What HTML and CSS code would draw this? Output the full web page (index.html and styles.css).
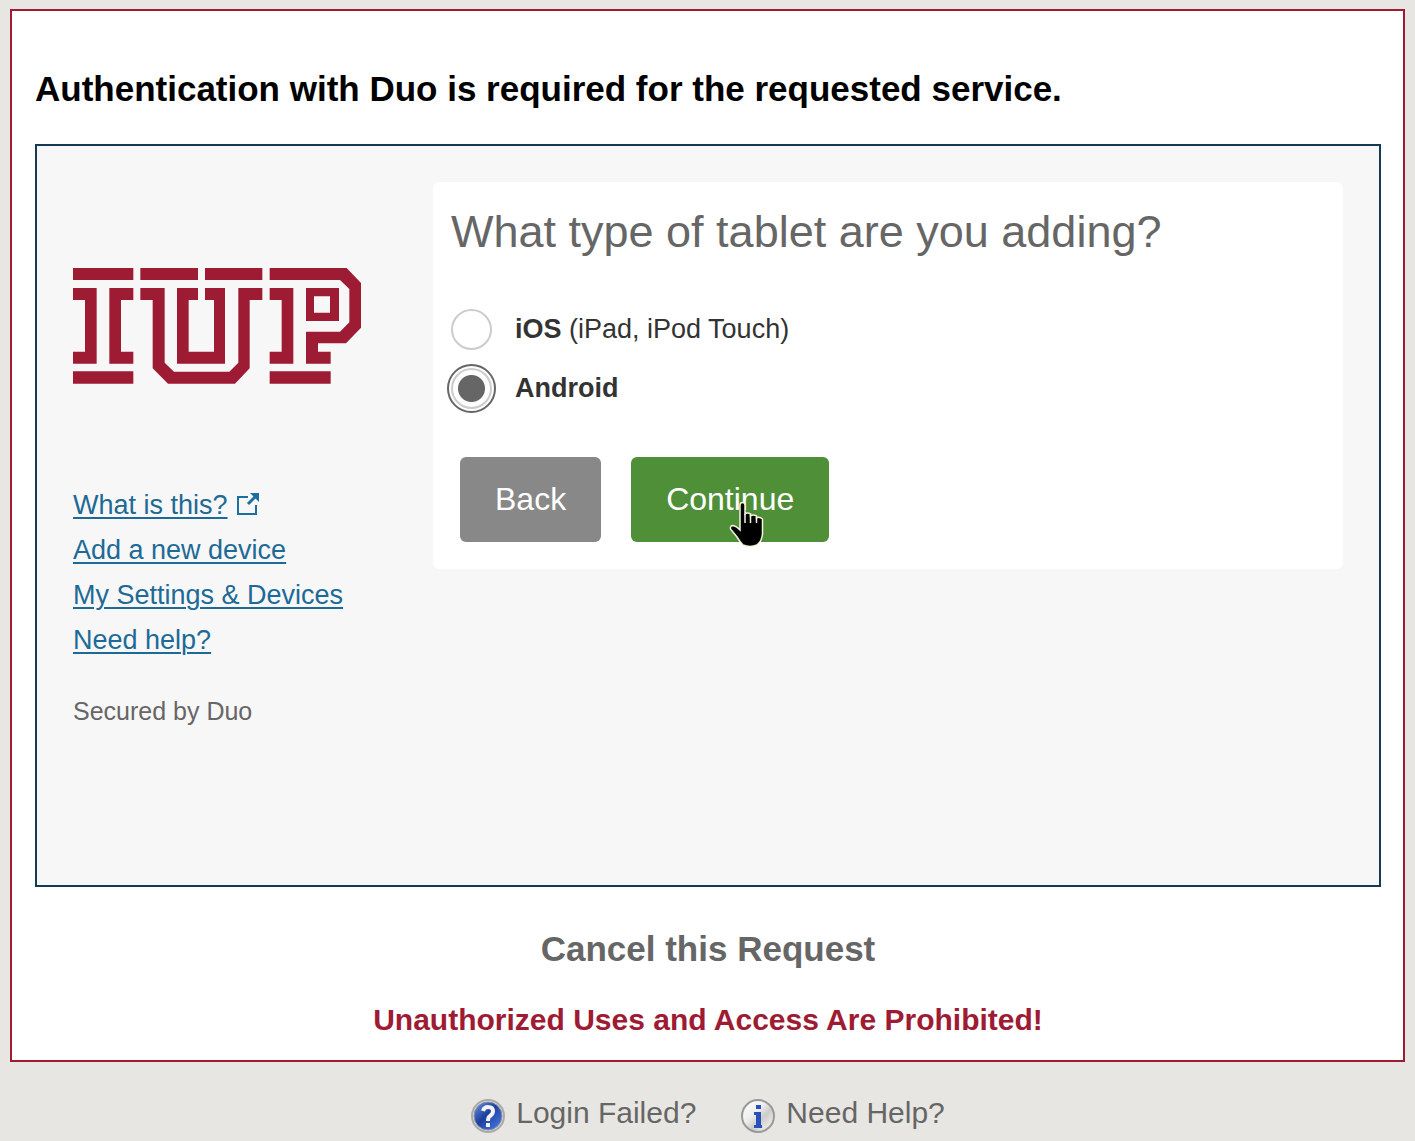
FILE: index.html
```html
<!DOCTYPE html>
<html lang="en">
<head>
    <meta charset="UTF-8">
    <meta name="viewport" content="width=device-width, initial-scale=1.0">
    <title>Duo Authentication</title>
    <link rel="stylesheet" href="styles.css">
</head>
<body>
    <main class="page">
        <h1>Authentication with Duo is required for the requested service.</h1>

        <div class="duo-frame">
            <aside class="sidebar">
                <svg class="logo" viewBox="39 39 864 348" role="img" aria-label="IUP">
                    <path d="M39 39H220V75H39Z M39 99H110V326H39V290H75V135H39Z M148 99H220V135H183V290H220V326H148Z M39 349H220V386H39Z"/>
                    <path d="M241 39H414V75H241Z M435 39H607V75H435Z M241 99H314V323L342 350H508L535 323V99H607V135H569V340L525 386H324L278 340V135H241Z M351 99H414V135H386V290H462V135H435V99H495V326H351Z"/>
                    <path fill-rule="evenodd" d="M629 39H860L903 84V218L858 265H774V290H812V326H738V230H840L868 202V102L840 75H629Z M629 99H700V326H629V290H665V135H629Z M738 99H837V198H738Z M762 124V173H810V124Z M629 349H812V386H629Z"/>
                </svg>
                <ul class="links">
                    <li>
                        <a href="#">What is this?</a>
                        <svg class="external" viewBox="0 0 24 24" aria-hidden="true">
                            <path d="M12 4H2V21H20V12" fill="none" stroke="currentColor" stroke-width="2"/>
                            <path d="M12 11L20 3" fill="none" stroke="currentColor" stroke-width="3"/>
                            <path d="M14 0H23V9Z" fill="currentColor"/>
                        </svg>
                    </li>
                    <li><a href="#">Add a new device</a></li>
                    <li><a href="#">My Settings &amp; Devices</a></li>
                    <li><a href="#">Need help?</a></li>
                </ul>
                <p class="secured">Secured by Duo</p>
            </aside>

            <form class="card">
                <h2>What type of tablet are you adding?</h2>
                <div class="option">
                    <input type="radio" name="tablet" id="ios">
                    <label for="ios"><b>iOS</b> (iPad, iPod Touch)</label>
                </div>
                <div class="option">
                    <input type="radio" name="tablet" id="android" checked>
                    <label for="android"><b>Android</b></label>
                </div>
                <div class="buttons">
                    <button type="button" class="back">Back</button>
                    <button type="button" class="continue">Continue
                        <svg class="pointer" viewBox="0 0 35 47" aria-hidden="true">
                            <path d="M11 4Q11 1.500 13.500 1.500Q16 1.500 16 4V13Q18 11 21.500 13V15Q24 13 27.500 15V17Q30 15 33.500 18V33Q33 40 28 44Q21 47 14 44Q11 41 8 36L1.500 28Q1 24.500 4 24.500Q7 25 11 29Z" fill="#000" stroke="#f4f4dc" stroke-width="1.500"/>
                            <path d="M16 13V22M21.500 14V22M27.500 16V22" fill="none" stroke="#f4f4dc" stroke-width="1.500"/>
                        </svg>
                    </button>
                </div>
            </form>
        </div>

        <a class="cancel" href="#">Cancel this Request</a>
        <p class="warning">Unauthorized Uses and Access Are Prohibited!</p>
    </main>

    <footer>
        <a href="#">
            <svg class="icon" viewBox="0 0 36 38" aria-hidden="true">
                <defs>
                    <linearGradient id="blue" x1="0" y1="0" x2="1" y2="1">
                        <stop offset="0" stop-color="#6f96dc"/>
                        <stop offset=".45" stop-color="#1c3f9e"/>
                        <stop offset="1" stop-color="#4d80e8"/>
                    </linearGradient>
                </defs>
                <circle cx="18" cy="19" r="16" fill="#ddd" stroke="#aaa" stroke-width="2"/>
                <circle cx="18" cy="19" r="14" fill="url(#blue)" stroke="#8a93ad"/>
                <path d="M13 14Q14 10 18 10Q23 10 23 14Q23 17 20 19Q18 20 18 24" fill="none" stroke="#f2f2f2" stroke-width="4"/>
                <path d="M16 26H20V30H16Z" fill="#f2f2f2"/>
            </svg>
            <span>Login Failed?</span>
        </a>
        <a href="#">
            <svg class="icon" viewBox="0 0 36 38" aria-hidden="true">
                <defs>
                    <linearGradient id="silver" x1="0" y1="0" x2="1" y2="1">
                        <stop offset="0" stop-color="#fff"/>
                        <stop offset=".4" stop-color="#eee"/>
                        <stop offset=".6" stop-color="#ccc"/>
                        <stop offset="1" stop-color="#fff"/>
                    </linearGradient>
                </defs>
                <circle cx="18" cy="19" r="16" fill="url(#silver)" stroke="#999" stroke-width="2"/>
                <path d="M16 8H21V12H16Z M14 15H21V28H22V31H14V28H16V18H14Z" fill="#2850b8"/>
            </svg>
            <span>Need Help?</span>
        </a>
    </footer>
</body>
</html>
```
FILE: styles.css
```css
* {
    box-sizing: border-box;
}

body {
    background-color: #e8e6e2;
    color: #666;
    font-family: "Liberation Sans", Arial, sans-serif;
    margin: 9px 10px 0;
}

h1, h2, p, ul {
    margin: 0;
    padding: 0;
}

.page {
    background-color: #fff;
    border: 2px solid #9e1b34;
    padding: 57px 22px 22px 23px;
}

h1 {
    color: #000;
    font-size: 35px;
    line-height: 42px;
    margin-bottom: 34px;
}

.duo-frame {
    background-color: #f7f7f7;
    border: 2px solid #143a54;
    display: flex;
    align-items: flex-start;
    min-height: 743px;
    padding: 36px;
}

/* Left column */
.sidebar {
    flex: 0 0 360px;
    padding-top: 86px;
}

.logo {
    display: block;
    fill: #9e1b34;
    height: 116px;
    width: 288px;
}

.links {
    font-size: 27px;
    line-height: 45px;
    list-style: none;
    margin-top: 99px;
}

.links li {
    color: #1d6fa0;
    display: flex;
    align-items: center;
    gap: 8px;
}

.links a {
    color: #1d6a96;
    text-decoration-thickness: 2px;
    text-underline-offset: 3px;
}

.external {
    height: 24px;
    margin-bottom: 2px;
    width: 24px;
}

.secured {
    font-size: 25px;
    line-height: 30px;
    margin-top: 33px;
}

/* Question card */
.card {
    background-color: #fff;
    border-radius: 6px;
    flex: 1;
    padding: 24px 18px 27px;
}

h2 {
    font-size: 45px;
    font-weight: normal;
    line-height: 52px;
    margin-bottom: 42px;
}

.option {
    color: #333;
    display: flex;
    align-items: center;
    font-size: 27px;
    height: 59px;
    gap: 23px;
}

.option input {
    appearance: none;
    border: 2px solid #ccc;
    border-radius: 50%;
    height: 41px;
    margin: 0 0 1px;
    width: 41px;
}

.option input:checked {
    background: radial-gradient(circle, #666 13px, #fff 14px);
    outline: 2px solid #666;
    outline-offset: 2px;
}

.buttons {
    display: flex;
    gap: 30px;
    margin: 39px 9px 0;
}

button {
    border: 0;
    border-radius: 6px;
    color: #fff;
    cursor: pointer;
    font-family: inherit;
    font-size: 32px;
    height: 85px;
    padding: 0 35px;
    position: relative;
}

.back {
    background-color: #888;
}

.continue {
    background-color: #4f8f38;
}

.pointer {
    height: 47px;
    left: 98px;
    position: absolute;
    top: 44px;
    width: 35px;
}

/* Below the frame */
.cancel {
    color: #666;
    display: block;
    font-size: 35px;
    font-weight: bold;
    line-height: 42px;
    margin-top: 41px;
    text-align: center;
    text-decoration: none;
}

.warning {
    color: #9e1b34;
    font-size: 30px;
    font-weight: bold;
    line-height: 36px;
    margin-top: 32px;
    text-align: center;
}

footer {
    display: flex;
    justify-content: center;
    gap: 44px;
    padding-top: 33px;
}

footer a {
    color: #666;
    display: flex;
    font-size: 30px;
    gap: 10px;
    line-height: 36px;
    text-decoration: none;
}

.icon {
    height: 38px;
    margin-top: 2px;
    width: 36px;
}
```
